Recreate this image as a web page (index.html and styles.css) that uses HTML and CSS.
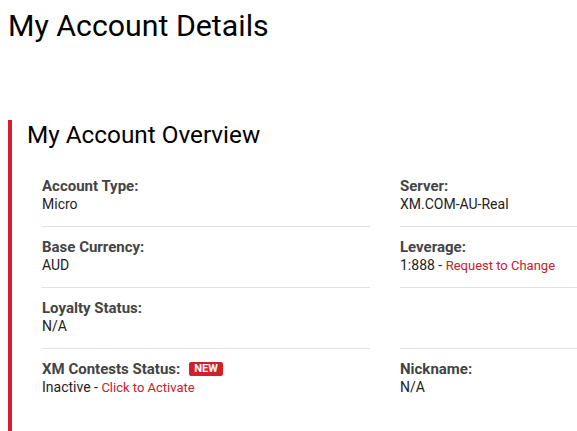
FILE: index.html
```html
<!DOCTYPE html>
<html lang="en">
<head>
<meta charset="utf-8">
<title>My Account Details</title>
<link rel="stylesheet" href="styles.css">
</head>
<body>
<div class="page">
  <h1 class="page-title">My Account Details</h1>
  <section class="overview">
    <h2 class="overview-title">My Account Overview</h2>
    <div class="details">
      <div class="item">
        <div class="label">Account Type:</div>
        <div class="value">Micro</div>
      </div>
      <div class="item">
        <div class="label">Server:</div>
        <div class="value">XM.COM-AU-Real</div>
      </div>
      <div class="item">
        <div class="label">Base Currency:</div>
        <div class="value">AUD</div>
      </div>
      <div class="item">
        <div class="label">Leverage:</div>
        <div class="value">1:888 - <a class="link" href="#">Request to Change</a></div>
      </div>
      <div class="item">
        <div class="label">Loyalty Status:</div>
        <div class="value">N/A</div>
      </div>
      <div class="item"></div>
      <div class="item last">
        <div class="label">XM Contests Status: <span class="badge">NEW</span></div>
        <div class="value">Inactive - <a class="link" href="#">Click to Activate</a></div>
      </div>
      <div class="item last">
        <div class="label">Nickname:</div>
        <div class="value">N/A</div>
      </div>
    </div>
  </section>
</div>
</body>
</html>
```

FILE: styles.css
```css
html, body {
  margin: 0;
  padding: 0;
  overflow: hidden;
  background: #ffffff;
}

body {
  font-family: Roboto, "Liberation Sans", Arial, sans-serif;
  color: #222222;
}

.page {
  padding: 8px;
  width: 800px;
}

.page-title {
  margin: 0;
  font-size: 30.3px;
  font-weight: 400;
  line-height: 35px;
  color: #000000;
}

.overview {
  margin-top: 77px;
  border-left: 4px solid #d41f2b;
  padding-left: 15px;
  padding-bottom: 40px;
}

.overview-title {
  margin: 0 0 17px 0;
  font-size: 24.3px;
  font-weight: 400;
  line-height: 29px;
  color: #000000;
}

.details {
  margin-left: 15px;
  display: grid;
  grid-template-columns: 328px 328px;
  column-gap: 30px;
}

.item {
  padding: 11px 0 13px 0;
  border-bottom: 1px solid #e0e0e0;
  min-height: 36px;
}

.item.last {
  border-bottom: none;
}

.label {
  font-size: 15px;
  line-height: 18px;
  font-weight: 700;
  color: #444444;
  display: flex;
  align-items: center;
}

.value {
  font-size: 14px;
  line-height: 18px;
  color: #222222;
}

.link {
  font-size: 13px;
  line-height: 1;
  color: #c8202d;
  text-decoration: none;
}

.badge {
  display: inline-block;
  margin-left: 9px;
  background: #d41f2b;
  color: #ffffff;
  font-size: 11px;
  font-weight: 700;
  line-height: 14px;
  height: 14px;
  padding: 0 5px;
  border-radius: 2px;
}
```
